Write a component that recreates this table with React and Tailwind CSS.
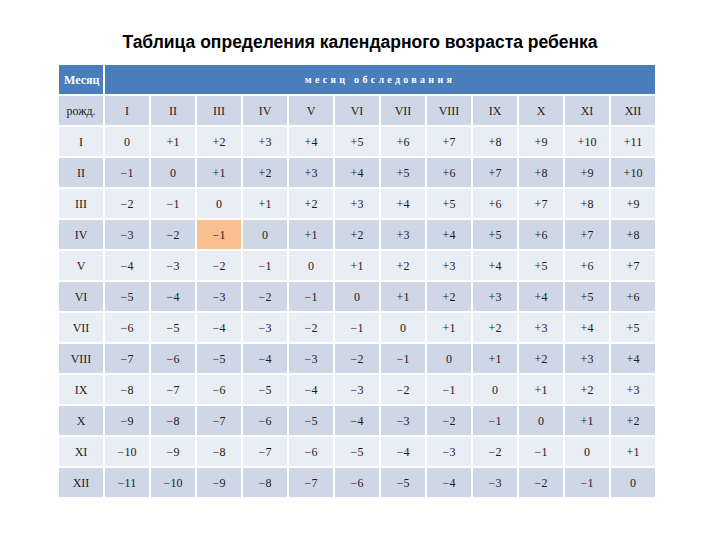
const months = ['I', 'II', 'III', 'IV', 'V', 'VI', 'VII', 'VIII', 'IX', 'X', 'XI', 'XII'];

// разница между месяцем обследования и месяцем рождения
const fmt = (n) => (n > 0 ? `+${n}` : n < 0 ? `\u2212${-n}` : '0');

export default function App() {
    return (
        <div className="w-[720px] h-[540px] bg-white overflow-hidden">
            <h1 className="pt-[31px] text-center text-[17.5px] leading-[22px] font-bold text-black font-['Liberation_Sans',Arial,sans-serif]">
                Таблица определения календарного возраста ребенка
            </h1>

            <div className="ml-[59px] mt-[12px] w-[596px] grid grid-cols-[repeat(13,minmax(0,1fr))] gap-[2px] bg-white font-['Liberation_Serif','Times_New_Roman',serif] text-[12px] text-[#1c1c1c]">
                <div className="h-[29px] bg-[#4a7ebb] flex items-center pl-[5px] text-white font-bold text-[12px]">
                    Месяц
                </div>
                <div className="col-span-12 h-[29px] bg-[#4a7ebb] flex items-center justify-center text-white font-bold text-[10px] tracking-[3.3px]">
                    месяц обследования
                </div>

                <div className="h-[29px] bg-[#cfd7e6] flex items-center justify-center">рожд.</div>
                {months.map((m) => (
                    <div key={m} className="h-[29px] bg-[#cfd7e6] flex items-center justify-center">
                        {m}
                    </div>
                ))}

                {months.map((birth, r) => {
                    const rowBg = r % 2 === 0 ? 'bg-[#e9edf4]' : 'bg-[#cfd7e6]';
                    return [
                        <div key={`${birth}-h`} className={`h-[29px] ${rowBg} flex items-center justify-center`}>
                            {birth}
                        </div>,
                        ...months.map((m, c) => {
                            const hot = r === 3 && c === 2;
                            return (
                                <div
                                    key={`${birth}-${m}`}
                                    className={`h-[29px] flex items-center justify-center ${hot ? 'bg-[#f9bf8f]' : rowBg}`}
                                >
                                    {fmt(c - r)}
                                </div>
                            );
                        }),
                    ];
                })}
            </div>
        </div>
    );
}
